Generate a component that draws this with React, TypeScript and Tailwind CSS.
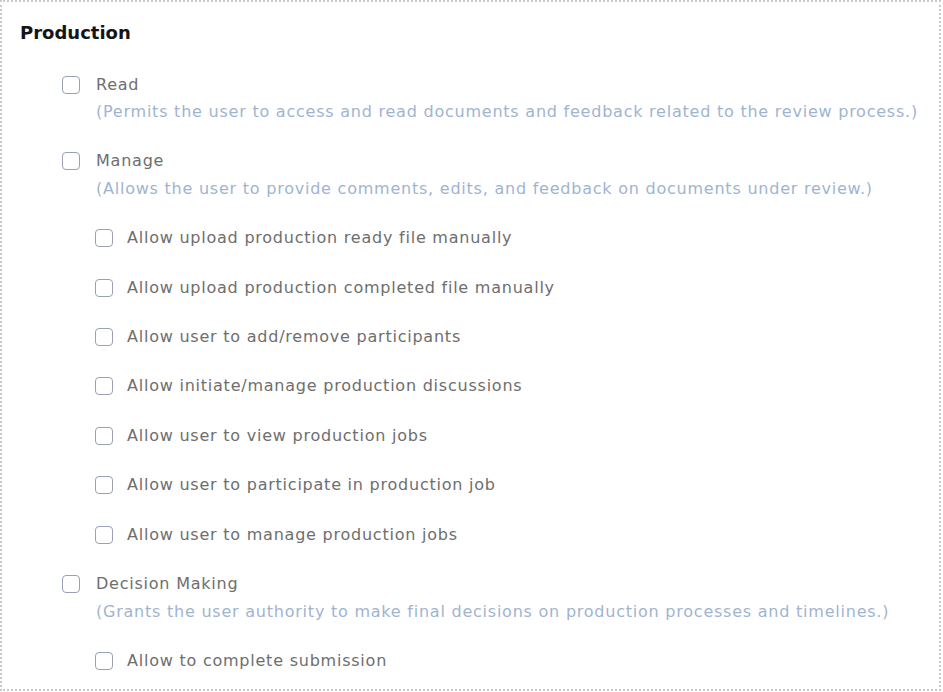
const subManage = [
  "Allow upload production ready file manually",
  "Allow upload production completed file manually",
  "Allow user to add/remove participants",
  "Allow initiate/manage production discussions",
  "Allow user to view production jobs",
  "Allow user to participate in production job",
  "Allow user to manage production jobs",
];

function Box() {
  return (
    <span className="block w-[18px] h-[18px] shrink-0 rounded-[4px] border-[1.5px] border-[#9aa1b5] bg-white" />
  );
}

function Main({ label, desc }: { label: string; desc: string }) {
  return (
    <div className="flex gap-4">
      <div className="h-6 flex items-center">
        <Box />
      </div>
      <div className="tracking-[0.77px]">
        <div className="h-6 leading-6 text-[#6e6e6e]">{label}</div>
        <div className="mt-[3.5px] h-6 leading-6 text-[#a0b4d1]">{desc}</div>
      </div>
    </div>
  );
}

function Sub({ label }: { label: string }) {
  return (
    <div className="flex items-center gap-[14px] h-6 pl-[33px]">
      <Box />
      <span className="tracking-[0.77px] text-[#6e6e6e]">{label}</span>
    </div>
  );
}

export default function App() {
  return (
    <div
      className="w-[941px] h-[691px] overflow-hidden bg-white border-2 border-dotted border-[#c9c9c9] text-[16px]"
      style={{ fontFamily: '"DejaVu Sans", sans-serif' }}
    >
      <h2 className="pt-[17px] pl-[18px] h-[47px] text-[18px] leading-7 font-bold text-[#151515]">
        Production
      </h2>
      <div className="mt-[23.5px] pl-[60px] flex flex-col gap-[25.4px]">
        <Main
          label="Read"
          desc="(Permits the user to access and read documents and feedback related to the review process.)"
        />
        <Main
          label="Manage"
          desc="(Allows the user to provide comments, edits, and feedback on documents under review.)"
        />
        {subManage.map((s) => (
          <Sub key={s} label={s} />
        ))}
        <Main
          label="Decision Making"
          desc="(Grants the user authority to make final decisions on production processes and timelines.)"
        />
        <Sub label="Allow to complete submission" />
      </div>
    </div>
  );
}
